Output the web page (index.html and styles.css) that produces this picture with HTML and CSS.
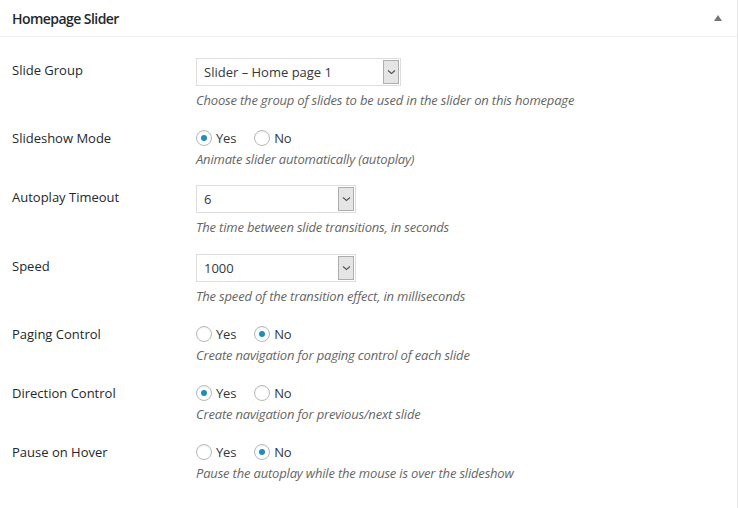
FILE: index.html
```html
<!DOCTYPE html>
<html>
<head>
<meta charset="utf-8">
<link rel="stylesheet" href="styles.css">
</head>
<body>
<div class="postbox">
  <div class="hndle">
    <h2 class="title">Homepage Slider</h2>
    <span class="toggle"></span>
  </div>
  <div class="inside">
    <div class="row">
      <div class="label label-select">Slide Group</div>
      <div class="field">
        <div class="select w205"><span class="value">Slider – Home page 1</span><span class="arrow"><svg width="9" height="6" viewBox="0 0 9 6"><path d="M1 1.5 L4.5 4.5 L8 1.5" fill="none" stroke="#555" stroke-width="1.1"/></svg></span></div>
        <p class="desc desc-select">Choose the group of slides to be used in the slider on this homepage</p>
      </div>
    </div>
    <div class="row row-radio row-tight">
      <div class="label">Slideshow Mode</div>
      <div class="field">
        <div class="radios">
          <label class="opt"><span class="radio checked"></span>Yes</label>
          <label class="opt"><span class="radio"></span>No</label>
        </div>
        <p class="desc">Animate slider automatically (autoplay)</p>
      </div>
    </div>
    <div class="row">
      <div class="label label-select">Autoplay Timeout</div>
      <div class="field">
        <div class="select w160"><span class="value">6</span><span class="arrow"><svg width="9" height="6" viewBox="0 0 9 6"><path d="M1 1.5 L4.5 4.5 L8 1.5" fill="none" stroke="#555" stroke-width="1.1"/></svg></span></div>
        <p class="desc desc-select">The time between slide transitions, in seconds</p>
      </div>
    </div>
    <div class="row">
      <div class="label label-select">Speed</div>
      <div class="field">
        <div class="select w160"><span class="value">1000</span><span class="arrow"><svg width="9" height="6" viewBox="0 0 9 6"><path d="M1 1.5 L4.5 4.5 L8 1.5" fill="none" stroke="#555" stroke-width="1.1"/></svg></span></div>
        <p class="desc desc-select">The speed of the transition effect, in milliseconds</p>
      </div>
    </div>
    <div class="row row-radio">
      <div class="label">Paging Control</div>
      <div class="field">
        <div class="radios">
          <label class="opt"><span class="radio"></span>Yes</label>
          <label class="opt"><span class="radio checked"></span>No</label>
        </div>
        <p class="desc">Create navigation for paging control of each slide</p>
      </div>
    </div>
    <div class="row row-radio">
      <div class="label">Direction Control</div>
      <div class="field">
        <div class="radios">
          <label class="opt"><span class="radio checked"></span>Yes</label>
          <label class="opt"><span class="radio"></span>No</label>
        </div>
        <p class="desc">Create navigation for previous/next slide</p>
      </div>
    </div>
    <div class="row row-radio">
      <div class="label">Pause on Hover</div>
      <div class="field">
        <div class="radios">
          <label class="opt"><span class="radio"></span>Yes</label>
          <label class="opt"><span class="radio checked"></span>No</label>
        </div>
        <p class="desc">Pause the autoplay while the mouse is over the slideshow</p>
      </div>
    </div>
  </div>
</div>
</body>
</html>
```
FILE: styles.css
```css
html, body {
  margin: 0;
  padding: 0;
  background: #fff;
}
body {
  font-family: "Open Sans", "Noto Sans", sans-serif;
  font-size: 13px;
  color: #23282d;
}
.postbox {
  width: 737px;
  height: 508px;
  border-right: 1px solid #e5e5e5;
  background: #fff;
}
.hndle {
  display: flex;
  align-items: center;
  justify-content: space-between;
  height: 36px;
  padding: 0 12px;
  border-bottom: 1px solid #eee;
}
.title {
  margin: 0;
  font-size: 14px;
  font-weight: 600;
  letter-spacing: -0.55px;
  color: #23282d;
}
.toggle {
  width: 0;
  height: 0;
  border-left: 4px solid transparent;
  border-right: 4px solid transparent;
  border-bottom: 6px solid #72777c;
  margin-right: 3px;
}
.inside {
  padding-top: 21px;
}
.row {
  display: flex;
  padding-bottom: 19px;
}
.row-radio {
  padding-top: 1px;
}
.row-tight {
  padding-bottom: 18px;
}
.label {
  width: 184px;
  padding-left: 12px;
  line-height: 20px;
  color: #23282d;
}
.label-select {
  padding-top: 2px;
}
.field {
  flex: 1;
}
.select {
  display: flex;
  height: 28px;
  box-sizing: border-box;
  border: 1px solid #ddd;
  background: #fff;
}
.w205 { width: 205px; }
.w160 { width: 160px; }
.value {
  flex: 1;
  padding-left: 7px;
  line-height: 26px;
  color: #32373c;
}
.arrow {
  width: 16px;
  margin: 1px;
  box-sizing: border-box;
  border: 1px solid #adadad;
  background: #e5e5e5;
  display: flex;
  align-items: center;
  justify-content: center;
}
.radios {
  display: flex;
  height: 20px;
  align-items: center;
}
.opt {
  display: flex;
  align-items: center;
  margin-right: 18px;
  letter-spacing: -0.2px;
  color: #32373c;
}
.radio {
  width: 16px;
  height: 16px;
  box-sizing: border-box;
  border: 1px solid #b4b9be;
  border-radius: 50%;
  box-shadow: inset 0 1px 2px rgba(0,0,0,0.07);
  margin-right: 4px;
  display: flex;
  align-items: center;
  justify-content: center;
}
.radio.checked::before {
  content: "";
  width: 6px;
  height: 6px;
  border-radius: 50%;
  background: #1e8cbe;
}
.desc {
  margin: 3px 0 0;
  font-style: italic;
  font-size: 13px;
  letter-spacing: -0.18px;
  line-height: 16px;
  color: #666;
}
.desc-select {
  margin-top: 6px;
}
```
